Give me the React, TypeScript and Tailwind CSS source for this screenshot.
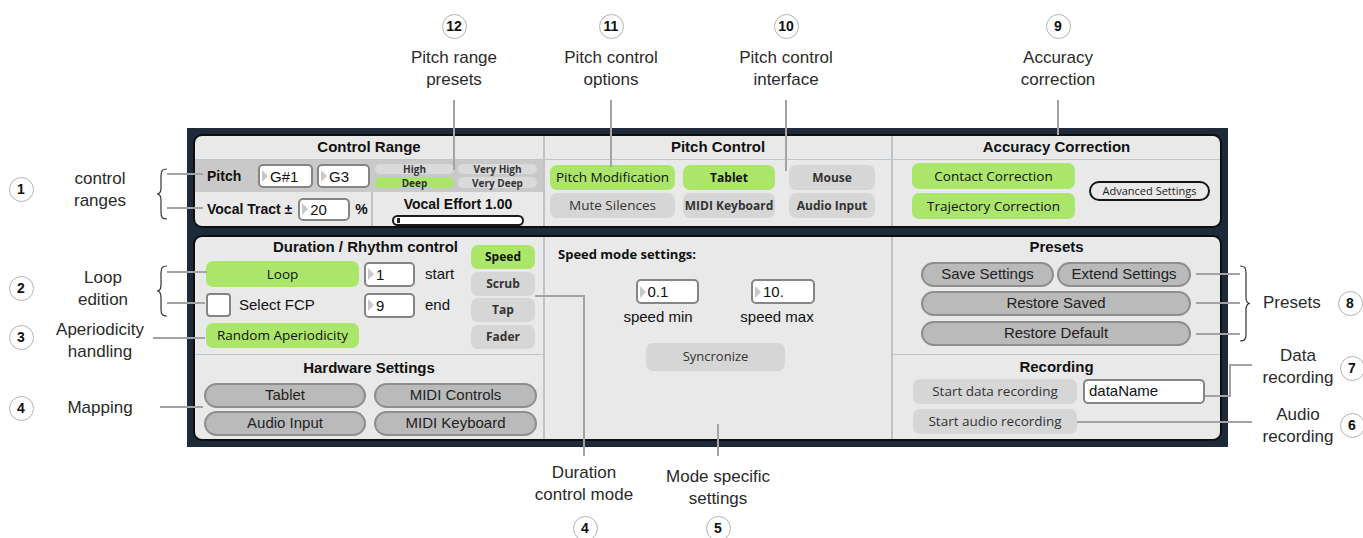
import React from 'react';

const lucida = "font-['Open_Sans',sans-serif]";

const Num = ({ v, className = '' }: { v: string; className?: string }) => (
  <div className={`flex items-center rounded-[5px] border-2 border-[#858585] bg-white ${className}`}>
    <span className="ml-[2px] h-0 w-0 border-y-[6px] border-l-[6px] border-y-transparent border-l-[#c8c8c8]" />
    <span className="ml-[2px] text-[15px] leading-none text-[#111]">{v}</span>
  </div>
);

const Flat = ({ label, on = false, bold = false, className = '' }: { label: string; on?: boolean; bold?: boolean; className?: string }) => (
  <div
    className={`flex items-center justify-center rounded-[7px] ${lucida} ${
      bold ? 'text-[12px] font-bold' : 'text-[13.5px]'
    } ${on ? 'bg-[#abe66a] text-[#111]' : 'bg-[#d6d6d6] text-[#333]'} ${className}`}
  >
    {label}
  </div>
);

const Pill = ({ label, className = '' }: { label: string; className?: string }) => (
  <div className={`flex h-[25px] items-center justify-center rounded-full border-2 border-[#8e8e8e] bg-[#bababa] text-[15px] text-[#222] ${className}`}>
    {label}
  </div>
);

const Tiny = ({ label, on = false, className = '' }: { label: string; on?: boolean; className?: string }) => (
  <div
    className={`flex items-center justify-center rounded-full ${lucida} text-[10px] font-bold leading-none text-[#333] ${
      on ? 'bg-[#abe66a]' : 'bg-[#dadada]'
    } ${className}`}
  >
    {label}
  </div>
);

const Head = ({ children, className = '' }: { children: React.ReactNode; className?: string }) => (
  <div className={`flex items-center justify-center text-[15px] font-bold text-[#111] ${className}`}>{children}</div>
);

const Circle = ({ n, x, y }: { n: string; x: number; y: number }) => (
  <div
    className="absolute flex h-[25px] w-[25px] items-center justify-center rounded-full border-[1.5px] border-[#b3b3b3] bg-white text-[14px] font-bold text-[#111]"
    style={{ left: x - 12.5, top: y - 12.5 }}
  >
    {n}
  </div>
);

const Label = ({ lines, x, y }: { lines: string[]; x: number; y: number }) => (
  <div
    className="absolute -translate-x-1/2 whitespace-nowrap text-center text-[17px] leading-[22px] text-[#2a2a2a]"
    style={{ left: x, top: y }}
  >
    {lines.map((l) => (
      <div key={l}>{l}</div>
    ))}
  </div>
);

const HLine = ({ x1, x2, y }: { x1: number; x2: number; y: number }) => (
  <div className="absolute h-[2px] bg-[#a3a3a3]" style={{ left: x1, top: y - 1, width: x2 - x1 }} />
);

const VLine = ({ x, y1, y2 }: { x: number; y1: number; y2: number }) => (
  <div className="absolute w-[2px] bg-[#a3a3a3]" style={{ left: x - 1, top: y1, height: y2 - y1 }} />
);

const BraceL = ({ x, y, h }: { x: number; y: number; h: number }) => (
  <svg className="absolute" style={{ left: x, top: y }} width="12" height={h} viewBox={`0 0 12 ${h}`}>
    <path
      d={`M11,1 C6,1 5,3 5,8 L5,${h / 2 - 6} C5,${h / 2 - 2} 3,${h / 2} 1,${h / 2} C3,${h / 2} 5,${h / 2 + 2} 5,${h / 2 + 6} L5,${h - 8} C5,${h - 3} 6,${h - 1} 11,${h - 1}`}
      fill="none"
      stroke="#333"
      strokeWidth="1.2"
    />
  </svg>
);

const BraceR = ({ x, y, h }: { x: number; y: number; h: number }) => (
  <svg className="absolute" style={{ left: x, top: y }} width="12" height={h} viewBox={`0 0 12 ${h}`}>
    <path
      d={`M1,1 C6,1 7,3 7,8 L7,${h / 2 - 6} C7,${h / 2 - 2} 9,${h / 2} 11,${h / 2} C9,${h / 2} 7,${h / 2 + 2} 7,${h / 2 + 6} L7,${h - 8} C7,${h - 3} 6,${h - 1} 1,${h - 1}`}
      fill="none"
      stroke="#333"
      strokeWidth="1.2"
    />
  </svg>
);

export default function App() {
  return (
    <div className="relative h-[538px] w-[1363px] overflow-hidden bg-white font-['Liberation_Sans',Arial,sans-serif]">
      <div className="pl-[187px] pt-[128px]">
        <div className="flex w-[1041px] flex-col gap-[7px] bg-[#1c2a39] p-[6px]">
          {/* top panel */}
          <div className="flex h-[94px] overflow-hidden rounded-[9px] border-2 border-[#0e0e0e] bg-[#e9e9e9]">
            <div className="flex w-[350px] flex-col border-r-2 border-[#bcc3c9]">
              <Head className="h-[24px] border-b border-[#bcc3c9]">Control Range</Head>
              <div className="flex h-[32px] items-center bg-[#c9c9c9] pl-[12px]">
                <span className="w-[51px] text-[14px] font-bold text-[#111]">Pitch</span>
                <Num v="G#1" className="h-[24px] w-[55px]" />
                <Num v="G3" className="ml-[4px] h-[24px] w-[53px]" />
                <div className="ml-[5px] grid w-[162px] grid-cols-2 gap-x-[4px] gap-y-[3px]">
                  <Tiny label="High" className="h-[10px]" />
                  <Tiny label="Very High" className="h-[10px]" />
                  <Tiny label="Deep" on className="h-[11px]" />
                  <Tiny label="Very Deep" className="h-[11px]" />
                </div>
              </div>
              <div className="flex flex-1">
                <div className="flex w-[178px] items-center border-r-2 border-[#bcc3c9] pl-[12px]">
                  <span className="text-[14px] font-bold text-[#111]">Vocal Tract ±</span>
                  <Num v="20" className="ml-[6px] h-[23px] w-[52px]" />
                  <span className="ml-[5px] text-[14px] font-bold text-[#111]">%</span>
                </div>
                <div className="flex flex-1 flex-col items-center pt-[4px]">
                  <span className="text-[14px] font-bold leading-[17px] text-[#111]">Vocal Effort 1.00</span>
                  <div className="mt-[2px] flex h-[11px] w-[132px] items-center rounded-full border-2 border-[#1a1a1a] bg-white pl-[3px]">
                    <div className="h-[5px] w-[3px] bg-[#222]" />
                  </div>
                </div>
              </div>
            </div>
            <div className="flex w-[348px] flex-col border-r-2 border-[#bcc3c9]">
              <Head className="h-[24px] border-b border-[#bcc3c9]">Pitch Control</Head>
              <div className="grid grid-cols-[125px_100px_100px] gap-y-[3px] pl-[5px] pt-[5px]">
                <Flat label="Pitch Modification" on className="h-[25px]" />
                <Flat label="Tablet" on bold className="ml-[8px] h-[25px]" />
                <Flat label="Mouse" bold className="ml-[14px] h-[25px]" />
                <Flat label="Mute Silences" className="h-[25px]" />
                <Flat label="MIDI Keyboard" bold className="ml-[8px] h-[25px]" />
                <Flat label="Audio Input" bold className="ml-[14px] h-[25px]" />
              </div>
            </div>
            <div className="flex flex-1 flex-col">
              <Head className="h-[24px] border-b border-[#bcc3c9]">Accuracy Correction</Head>
              <div className="flex items-center pl-[19px] pt-[3px]">
                <div className="flex flex-col gap-[4px]">
                  <Flat label="Contact Correction" on className="h-[26px] w-[163px]" />
                  <Flat label="Trajectory Correction" on className="h-[26px] w-[163px]" />
                </div>
                <div className={`ml-[14px] flex h-[20px] w-[121px] items-center justify-center rounded-full border-2 border-[#151515] ${lucida} text-[11px] text-[#222]`}>
                  Advanced Settings
                </div>
              </div>
            </div>
          </div>

          {/* bottom panel */}
          <div className="flex h-[206px] overflow-hidden rounded-[9px] border-2 border-[#0e0e0e] bg-[#e9e9e9]">
            <div className="flex w-[350px] flex-col border-r-2 border-[#bcc3c9]">
              <div className="grid h-[118px] grid-cols-[276px_64px] border-b border-[#bcc3c9]">
                <div className="flex flex-col">
                  <div className="h-[24px] pr-[13px] pt-[1px] text-right text-[15px] font-bold leading-[18px] text-[#111]">
                    Duration / Rhythm control
                  </div>
                  <div className="grid grid-cols-[153px_51px_auto] grid-rows-[26px_26px_25px] items-center gap-x-[5px] gap-y-[5px] pl-[11px]">
                    <Flat label="Loop" on className="h-[26px]" />
                    <Num v="1" className="h-[25px]" />
                    <span className="pl-[5px] text-[15px] text-[#111]">start</span>
                    <div className="flex items-center">
                      <div className="h-[24px] w-[25px] rounded-[4px] border-2 border-[#858585] bg-white" />
                      <span className="ml-[8px] text-[15px] text-[#111]">Select FCP</span>
                    </div>
                    <Num v="9" className="h-[25px]" />
                    <span className="pl-[5px] text-[15px] text-[#111]">end</span>
                    <Flat label="Random Aperiodicity" on className="h-[25px]" />
                  </div>
                </div>
                <div className="flex flex-col gap-[2.5px] pt-[8px]">
                  <Flat label="Speed" on bold className="h-[24px]" />
                  <Flat label="Scrub" bold className="h-[24px]" />
                  <Flat label="Tap" bold className="h-[24px]" />
                  <Flat label="Fader" bold className="h-[24px]" />
                </div>
              </div>
              <Head className="h-[26px] pt-[1px]">Hardware Settings</Head>
              <div className="grid grid-cols-[162px_163px] gap-x-[8px] gap-y-[3px] pl-[9px] pt-[2px]">
                <Pill label="Tablet" className="h-[24px]" />
                <Pill label="MIDI Controls" className="h-[24px]" />
                <Pill label="Audio Input" className="h-[24px]" />
                <Pill label="MIDI Keyboard" className="h-[24px]" />
              </div>
            </div>
            <div className="flex w-[348px] flex-col border-r-2 border-[#bcc3c9] pl-[13px] pt-[8px]">
              <span className={`${lucida} text-[13px] font-bold leading-[18px] text-[#111]`}>Speed mode settings:</span>
              <div className="mt-[16px] flex">
                <div className="ml-[59px] flex w-[82px] flex-col items-center">
                  <Num v="0.1" className="ml-[18px] h-[25px] w-[63px]" />
                  <span className="mt-[4px] text-[15px] leading-[18px] text-[#111]">speed min</span>
                </div>
                <div className="ml-[37px] flex w-[82px] flex-col items-center">
                  <Num v="10." className="ml-[12px] h-[25px] w-[64px]" />
                  <span className="mt-[4px] text-[15px] leading-[18px] text-[#111]">speed max</span>
                </div>
              </div>
              <Flat label="Syncronize" className="ml-[88px] mt-[17px] h-[28px] w-[139px] text-[13px]" />
            </div>
            <div className="flex flex-1 flex-col">
              <div className="flex h-[118px] flex-col border-b border-[#bcc3c9] pl-[28px]">
                <div className="h-[25px] pr-[28px] pt-[1px] text-center text-[15px] font-bold leading-[18px] text-[#111]">Presets</div>
                <div className="flex gap-[3px]">
                  <Pill label="Save Settings" className="w-[133px]" />
                  <Pill label="Extend Settings" className="w-[134px]" />
                </div>
                <Pill label="Restore Saved" className="mt-[4px] w-[270px]" />
                <Pill label="Restore Default" className="mt-[5px] w-[270px]" />
              </div>
              <Head className="h-[24px] pt-[1px]">Recording</Head>
              <div className="flex flex-col gap-[5px] pl-[20px]">
                <div className="flex items-center">
                  <Flat label="Start data recording" className="h-[25px] w-[164px]" />
                  <div className="ml-[6px] flex h-[25px] w-[122px] items-center rounded-[5px] border-2 border-[#858585] bg-white pl-[4px] text-[15px] text-[#111]">
                    dataName
                  </div>
                </div>
                <Flat label="Start audio recording" className="h-[25px] w-[164px]" />
              </div>
            </div>
          </div>
        </div>
      </div>

      {/* top callouts */}
      <Circle n="12" x={454} y={26} />
      <Circle n="11" x={611} y={26} />
      <Circle n="10" x={786} y={26} />
      <Circle n="9" x={1058} y={26} />
      <Label lines={['Pitch range', 'presets']} x={454} y={47} />
      <Label lines={['Pitch control', 'options']} x={611} y={47} />
      <Label lines={['Pitch control', 'interface']} x={786} y={47} />
      <Label lines={['Accuracy', 'correction']} x={1058} y={47} />
      <VLine x={454} y1={100} y2={170} />
      <VLine x={611} y1={100} y2={167} />
      <VLine x={786} y1={100} y2={171} />
      <VLine x={1058} y1={100} y2={135} />

      {/* left callouts */}
      <Circle n="1" x={21} y={189} />
      <Circle n="2" x={21} y={288} />
      <Circle n="3" x={21} y={337} />
      <Circle n="4" x={21} y={408} />
      <Label lines={['control', 'ranges']} x={100} y={168} />
      <Label lines={['Loop', 'edition']} x={103} y={267} />
      <Label lines={['Aperiodicity', 'handling']} x={100} y={319} />
      <Label lines={['Mapping']} x={100} y={397} />
      <BraceL x={156} y={168} h={52} />
      <BraceL x={156} y={265} h={52} />
      <HLine x1={167} x2={203} y={174} />
      <HLine x1={167} x2={203} y={208} />
      <HLine x1={167} x2={207} y={272} />
      <HLine x1={167} x2={205} y={303} />
      <HLine x1={153} x2={205} y={338} />
      <HLine x1={160} x2={203} y={407} />

      {/* right callouts */}
      <HLine x1={1196} x2={1240} y={274} />
      <HLine x1={1196} x2={1240} y={303} />
      <HLine x1={1196} x2={1240} y={334} />
      <BraceR x={1239} y={265} h={77} />
      <div className="absolute left-[1263px] top-[292px] text-[17px] leading-[22px] text-[#2a2a2a]">Presets</div>
      <Circle n="8" x={1350} y={303} />
      <Label lines={['Data', 'recording']} x={1298} y={345} />
      <Circle n="7" x={1352} y={368} />
      <Label lines={['Audio', 'recording']} x={1298} y={404} />
      <Circle n="6" x={1352} y={425} />
      <HLine x1={1230} x2={1252} y={365} />
      <VLine x={1230} y1={364} y2={397} />
      <HLine x1={1205} x2={1231} y={396} />
      <HLine x1={1077} x2={1252} y={422} />

      {/* bottom callouts */}
      <HLine x1={535} x2={585} y={296} />
      <VLine x={584} y1={295} y2={456} />
      <VLine x={718} y1={424} y2={456} />
      <Label lines={['Duration', 'control mode']} x={584} y={462} />
      <Label lines={['Mode specific', 'settings']} x={718} y={466} />
      <Circle n="4" x={585} y={528} />
      <Circle n="5" x={718} y={528} />
    </div>
  );
}
